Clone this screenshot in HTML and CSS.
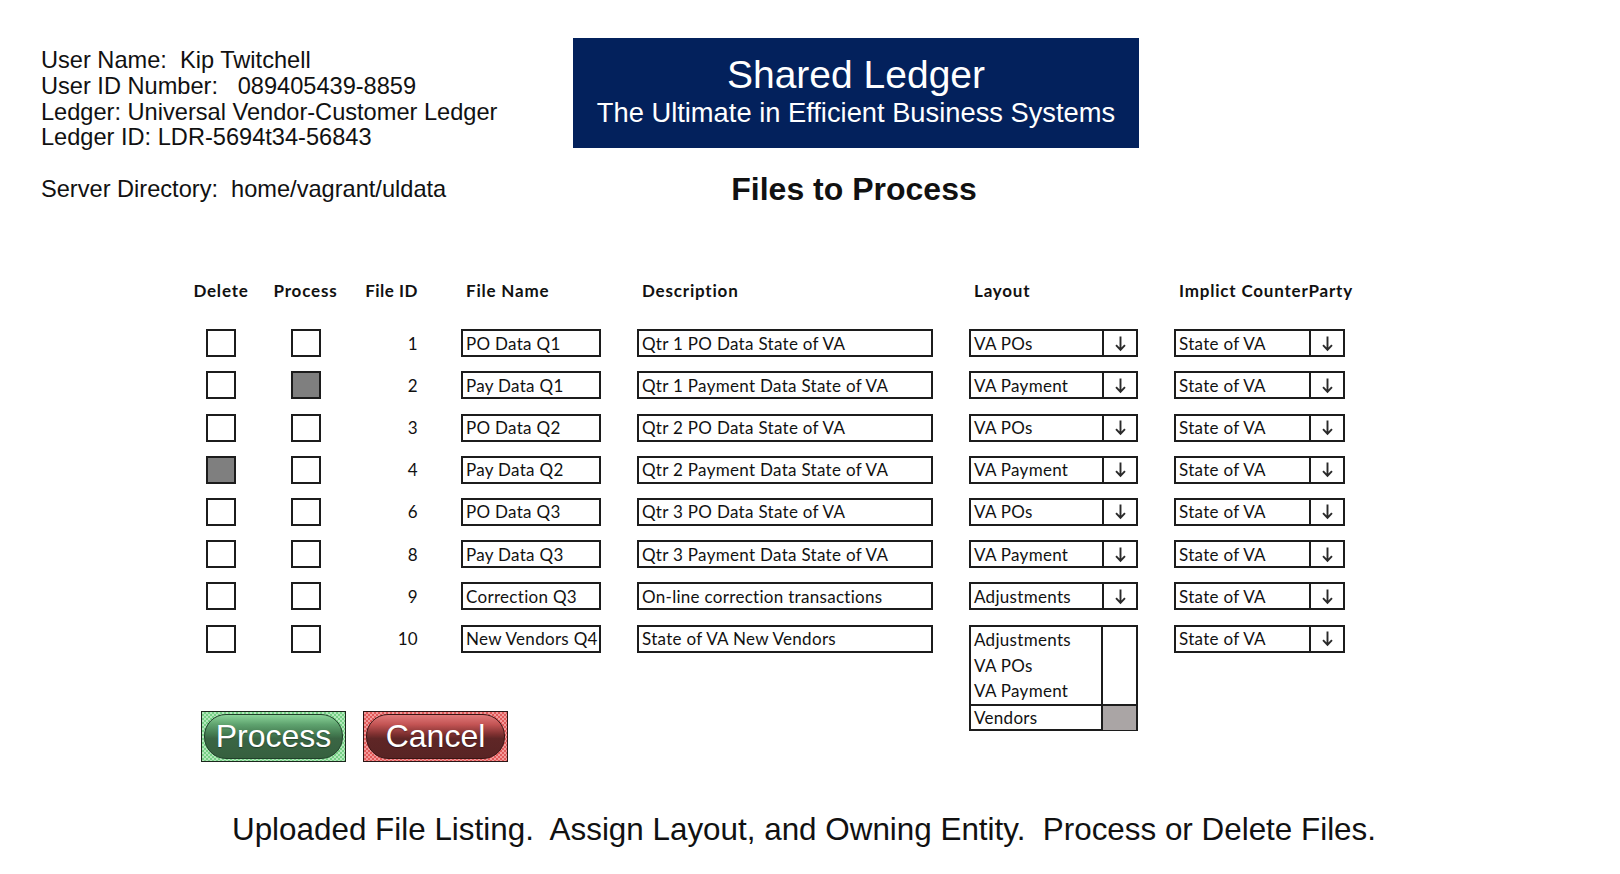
FILE: index.html
```html
<!DOCTYPE html>
<html>
<head>
<meta charset="utf-8">
<link rel="stylesheet" href="styles.css">
</head>
<body>
<div class="page">
  <header class="top">
    <div class="info">
      <div class="info-line">User Name:  Kip Twitchell</div>
      <div class="info-line">User ID Number:   089405439-8859</div>
      <div class="info-line">Ledger: Universal Vendor-Customer Ledger</div>
      <div class="info-line">Ledger ID: LDR-5694t34-56843</div>
      <div class="info-line">&nbsp;</div>
      <div class="info-line">Server Directory:  home/vagrant/uldata</div>
    </div>
    <div class="brand-col">
      <div class="banner">
        <div class="banner-title">Shared Ledger</div>
        <div class="banner-sub">The Ultimate in Efficient Business Systems</div>
      </div>
      <h1 class="page-title">Files to Process</h1>
    </div>
  </header>

  <section class="files">
    <div class="hd c-center">Delete</div>
    <div class="hd c-center">Process</div>
    <div class="hd c-right">File ID</div>
    <div class="hd c-end"><span class="hd-in w-name">File Name</span></div>
    <div class="hd c-end"><span class="hd-in w-desc">Description</span></div>
    <div class="hd c-end"><span class="hd-in w-layout">Layout</span></div>
    <div class="hd c-end"><span class="hd-in w-cp">Implict CounterParty</span></div>

    <!-- row 1 -->
    <div class="cell c-center"><span class="chk"></span></div>
    <div class="cell c-center"><span class="chk"></span></div>
    <div class="cell c-right id">1</div>
    <div class="cell c-end"><span class="field w-name">PO Data Q1</span></div>
    <div class="cell c-end"><span class="field w-desc">Qtr 1 PO Data State of VA</span></div>
    <div class="cell c-end"><span class="select w-layout"><span class="sel-val">VA POs</span><span class="sel-btn"><svg viewBox="0 0 12 16" class="arrow"><path d="M6 1.5V14M1.8 9.6L6 14l4.2-4.4"/></svg></span></span></div>
    <div class="cell c-end"><span class="select w-cp"><span class="sel-val">State of VA</span><span class="sel-btn"><svg viewBox="0 0 12 16" class="arrow"><path d="M6 1.5V14M1.8 9.6L6 14l4.2-4.4"/></svg></span></span></div>

    <!-- row 2 -->
    <div class="cell c-center"><span class="chk"></span></div>
    <div class="cell c-center"><span class="chk on"></span></div>
    <div class="cell c-right id">2</div>
    <div class="cell c-end"><span class="field w-name">Pay Data Q1</span></div>
    <div class="cell c-end"><span class="field w-desc">Qtr 1 Payment Data State of VA</span></div>
    <div class="cell c-end"><span class="select w-layout"><span class="sel-val">VA Payment</span><span class="sel-btn"><svg viewBox="0 0 12 16" class="arrow"><path d="M6 1.5V14M1.8 9.6L6 14l4.2-4.4"/></svg></span></span></div>
    <div class="cell c-end"><span class="select w-cp"><span class="sel-val">State of VA</span><span class="sel-btn"><svg viewBox="0 0 12 16" class="arrow"><path d="M6 1.5V14M1.8 9.6L6 14l4.2-4.4"/></svg></span></span></div>

    <!-- row 3 -->
    <div class="cell c-center"><span class="chk"></span></div>
    <div class="cell c-center"><span class="chk"></span></div>
    <div class="cell c-right id">3</div>
    <div class="cell c-end"><span class="field w-name">PO Data Q2</span></div>
    <div class="cell c-end"><span class="field w-desc">Qtr 2 PO Data State of VA</span></div>
    <div class="cell c-end"><span class="select w-layout"><span class="sel-val">VA POs</span><span class="sel-btn"><svg viewBox="0 0 12 16" class="arrow"><path d="M6 1.5V14M1.8 9.6L6 14l4.2-4.4"/></svg></span></span></div>
    <div class="cell c-end"><span class="select w-cp"><span class="sel-val">State of VA</span><span class="sel-btn"><svg viewBox="0 0 12 16" class="arrow"><path d="M6 1.5V14M1.8 9.6L6 14l4.2-4.4"/></svg></span></span></div>

    <!-- row 4 -->
    <div class="cell c-center"><span class="chk on"></span></div>
    <div class="cell c-center"><span class="chk"></span></div>
    <div class="cell c-right id">4</div>
    <div class="cell c-end"><span class="field w-name">Pay Data Q2</span></div>
    <div class="cell c-end"><span class="field w-desc">Qtr 2 Payment Data State of VA</span></div>
    <div class="cell c-end"><span class="select w-layout"><span class="sel-val">VA Payment</span><span class="sel-btn"><svg viewBox="0 0 12 16" class="arrow"><path d="M6 1.5V14M1.8 9.6L6 14l4.2-4.4"/></svg></span></span></div>
    <div class="cell c-end"><span class="select w-cp"><span class="sel-val">State of VA</span><span class="sel-btn"><svg viewBox="0 0 12 16" class="arrow"><path d="M6 1.5V14M1.8 9.6L6 14l4.2-4.4"/></svg></span></span></div>

    <!-- row 6 -->
    <div class="cell c-center"><span class="chk"></span></div>
    <div class="cell c-center"><span class="chk"></span></div>
    <div class="cell c-right id">6</div>
    <div class="cell c-end"><span class="field w-name">PO Data Q3</span></div>
    <div class="cell c-end"><span class="field w-desc">Qtr 3 PO Data State of VA</span></div>
    <div class="cell c-end"><span class="select w-layout"><span class="sel-val">VA POs</span><span class="sel-btn"><svg viewBox="0 0 12 16" class="arrow"><path d="M6 1.5V14M1.8 9.6L6 14l4.2-4.4"/></svg></span></span></div>
    <div class="cell c-end"><span class="select w-cp"><span class="sel-val">State of VA</span><span class="sel-btn"><svg viewBox="0 0 12 16" class="arrow"><path d="M6 1.5V14M1.8 9.6L6 14l4.2-4.4"/></svg></span></span></div>

    <!-- row 8 -->
    <div class="cell c-center"><span class="chk"></span></div>
    <div class="cell c-center"><span class="chk"></span></div>
    <div class="cell c-right id">8</div>
    <div class="cell c-end"><span class="field w-name">Pay Data Q3</span></div>
    <div class="cell c-end"><span class="field w-desc">Qtr 3 Payment Data State of VA</span></div>
    <div class="cell c-end"><span class="select w-layout"><span class="sel-val">VA Payment</span><span class="sel-btn"><svg viewBox="0 0 12 16" class="arrow"><path d="M6 1.5V14M1.8 9.6L6 14l4.2-4.4"/></svg></span></span></div>
    <div class="cell c-end"><span class="select w-cp"><span class="sel-val">State of VA</span><span class="sel-btn"><svg viewBox="0 0 12 16" class="arrow"><path d="M6 1.5V14M1.8 9.6L6 14l4.2-4.4"/></svg></span></span></div>

    <!-- row 9 -->
    <div class="cell c-center"><span class="chk"></span></div>
    <div class="cell c-center"><span class="chk"></span></div>
    <div class="cell c-right id">9</div>
    <div class="cell c-end"><span class="field w-name">Correction Q3</span></div>
    <div class="cell c-end"><span class="field w-desc">On-line correction transactions</span></div>
    <div class="cell c-end"><span class="select w-layout"><span class="sel-val">Adjustments</span><span class="sel-btn"><svg viewBox="0 0 12 16" class="arrow"><path d="M6 1.5V14M1.8 9.6L6 14l4.2-4.4"/></svg></span></span></div>
    <div class="cell c-end"><span class="select w-cp"><span class="sel-val">State of VA</span><span class="sel-btn"><svg viewBox="0 0 12 16" class="arrow"><path d="M6 1.5V14M1.8 9.6L6 14l4.2-4.4"/></svg></span></span></div>

    <!-- row 10 -->
    <div class="cell c-center"><span class="chk"></span></div>
    <div class="cell c-center"><span class="chk"></span></div>
    <div class="cell c-right id">10</div>
    <div class="cell c-end"><span class="field w-name">New Vendors Q4</span></div>
    <div class="cell c-end"><span class="field w-desc">State of VA New Vendors</span></div>
    <div class="cell c-end dd-anchor">
      <div class="listbox w-layout">
        <div class="lb-top">
          <div class="lb-items">
            <div class="lb-item">Adjustments</div>
            <div class="lb-item">VA POs</div>
            <div class="lb-item">VA Payment</div>
          </div>
          <div class="lb-track"></div>
        </div>
        <div class="lb-bottom">
          <div class="lb-item lb-sel">Vendors</div>
          <div class="lb-thumb"></div>
        </div>
      </div>
    </div>
    <div class="cell c-end"><span class="select w-cp"><span class="sel-val">State of VA</span><span class="sel-btn"><svg viewBox="0 0 12 16" class="arrow"><path d="M6 1.5V14M1.8 9.6L6 14l4.2-4.4"/></svg></span></span></div>
  </section>

  <div class="actions">
    <button class="btn btn-go"><span class="btn-pill">Process</span></button>
    <button class="btn btn-stop"><span class="btn-pill">Cancel</span></button>
  </div>

  <p class="footer-note">Uploaded File Listing.  Assign Layout, and Owning Entity.  Process or Delete Files.</p>
</div>
</body>
</html>
```

FILE: styles.css
```css
* { box-sizing: border-box; }

html, body {
  margin: 0;
  padding: 0;
  background: #ffffff;
}

body {
  font-family: "Liberation Sans", Arial, sans-serif;
  color: #111111;
  width: 1620px;
  height: 874px;
  overflow: hidden;
}

.page {
  padding-top: 38px;
}

/* ---------- top ---------- */
.top {
  display: flex;
  align-items: flex-start;
  padding-left: 41px;
}

.info {
  width: 532px;
  margin-top: 10px;
  font-size: 23.6px;
  line-height: 25.8px;
}

.info-line {
  white-space: pre;
}

.brand-col {
  width: 566px;
  display: flex;
  flex-direction: column;
}

.banner {
  height: 110px;
  background: #03215c;
  color: #ffffff;
  text-align: center;
  padding-top: 15px;
}

.banner-title {
  font-size: 39px;
  line-height: 44px;
}

.banner-sub {
  font-size: 27.3px;
  line-height: 32px;
}

.page-title {
  margin: 23px 0 0 0;
  font-size: 32px;
  line-height: 37px;
  font-weight: bold;
  text-align: center;
  padding-right: 4px;
}

/* ---------- files grid ---------- */
.files {
  margin-top: 73px;
  margin-left: 190px;
  display: grid;
  grid-template-columns: 62px 107px 59px 183px 332px 205px 207px;
  grid-template-rows: 34px repeat(8, 28px);
  row-gap: 14.2px;
  font-family: Lato, "Open Sans", sans-serif;
}

.hd {
  font-weight: bold;
  font-size: 17px;
  letter-spacing: 0.8px;
  line-height: 20px;
  align-self: start;
  white-space: nowrap;
}

.hd.c-right {
  letter-spacing: 0.5px;
}

.c-center { justify-self: center; }
.c-right { justify-self: end; }
.c-end { justify-self: end; }

.hd-in {
  display: block;
  padding-left: 5px;
}

.w-name { width: 140px; }
.w-desc { width: 296px; }
.w-layout { width: 169px; }
.w-cp { width: 171px; }

.cell {
  height: 28px;
  display: flex;
  align-items: center;
  font-size: 17px;
  letter-spacing: 0.3px;
}

.chk {
  display: block;
  width: 30px;
  height: 28px;
  border: 2px solid #1c1c1c;
  background: #ffffff;
}

.chk.on {
  background: #7f7f7f;
}

.field,
.select {
  display: flex;
  align-items: center;
  height: 28px;
  border: 2px solid #1c1c1c;
  background: #ffffff;
  padding-left: 3px;
  white-space: nowrap;
  overflow: hidden;
}

.select {
  padding-left: 0;
}

.sel-val {
  flex: 1;
  padding-left: 3px;
}

.sel-btn {
  width: 34px;
  height: 100%;
  border-left: 2px solid #1c1c1c;
  display: flex;
  align-items: center;
  justify-content: center;
}

.arrow {
  width: 13px;
  height: 17px;
  fill: none;
  stroke: #2a2a2a;
  stroke-width: 1.8;
}

/* open dropdown list */
.dd-anchor {
  position: relative;
  align-items: flex-start;
}

.listbox {
  position: absolute;
  top: 0;
  right: 0;
  height: 106px;
  border: 2px solid #1c1c1c;
  background: #ffffff;
  display: flex;
  flex-direction: column;
  z-index: 2;
}

.lb-top {
  display: flex;
  height: 77px;
}

.lb-items {
  flex: 1;
  padding-top: 0.5px;
}

.lb-item {
  height: 25.6px;
  line-height: 25.6px;
  padding-left: 3px;
  font-size: 17px;
  letter-spacing: 0.3px;
}

.lb-track {
  width: 35px;
  border-left: 2px solid #1c1c1c;
}

.lb-bottom {
  flex: 1;
  display: flex;
  border-top: 2px solid #1c1c1c;
}

.lb-sel {
  flex: 1;
  height: auto;
  line-height: 24px;
}

.lb-thumb {
  width: 35px;
  border-left: 2px solid #1c1c1c;
  background: #aaa5a5;
}

/* ---------- buttons ---------- */
.actions {
  display: flex;
  gap: 17px;
  margin-top: 58px;
  padding-left: 201px;
}

.btn {
  width: 145px;
  height: 51px;
  padding: 2px;
  border: 1.5px solid #1b261c;
  display: flex;
  cursor: pointer;
  font-family: "Liberation Sans", Arial, sans-serif;
}

.btn-pill {
  flex: 1;
  display: flex;
  align-items: center;
  justify-content: center;
  border-radius: 22px;
  color: #ffffff;
  font-size: 32px;
  line-height: 1;
  padding-bottom: 1px;
  text-shadow: 0 1px 1px rgba(0, 0, 0, 0.35);
}

.btn-go {
  background: repeating-conic-gradient(#76cf86 0 25%, #b3e9bb 0 50%) 0 0 / 4px 4px;
}

.btn-go .btn-pill {
  border: 1.5px solid #20402a;
  background: linear-gradient(to bottom, #8bd399 0%, #5fa36f 22%, #437a50 45%, #3a6644 55%, #36603f 100%);
}

.btn-stop {
  border-color: #2a1616;
  background: repeating-conic-gradient(#e05a5a 0 25%, #f39a9a 0 50%) 0 0 / 4px 4px;
}

.btn-stop .btn-pill {
  border: 1.5px solid #3a1414;
  background: linear-gradient(to bottom, #e07a7a 0%, #c35454 22%, #7e3030 45%, #5f2626 55%, #582424 100%);
}

/* ---------- footer ---------- */
.footer-note {
  margin: 50px 0 0 0;
  font-size: 31.4px;
  line-height: 36px;
  white-space: pre;
  text-align: center;
  padding-right: 12px;
}
```
